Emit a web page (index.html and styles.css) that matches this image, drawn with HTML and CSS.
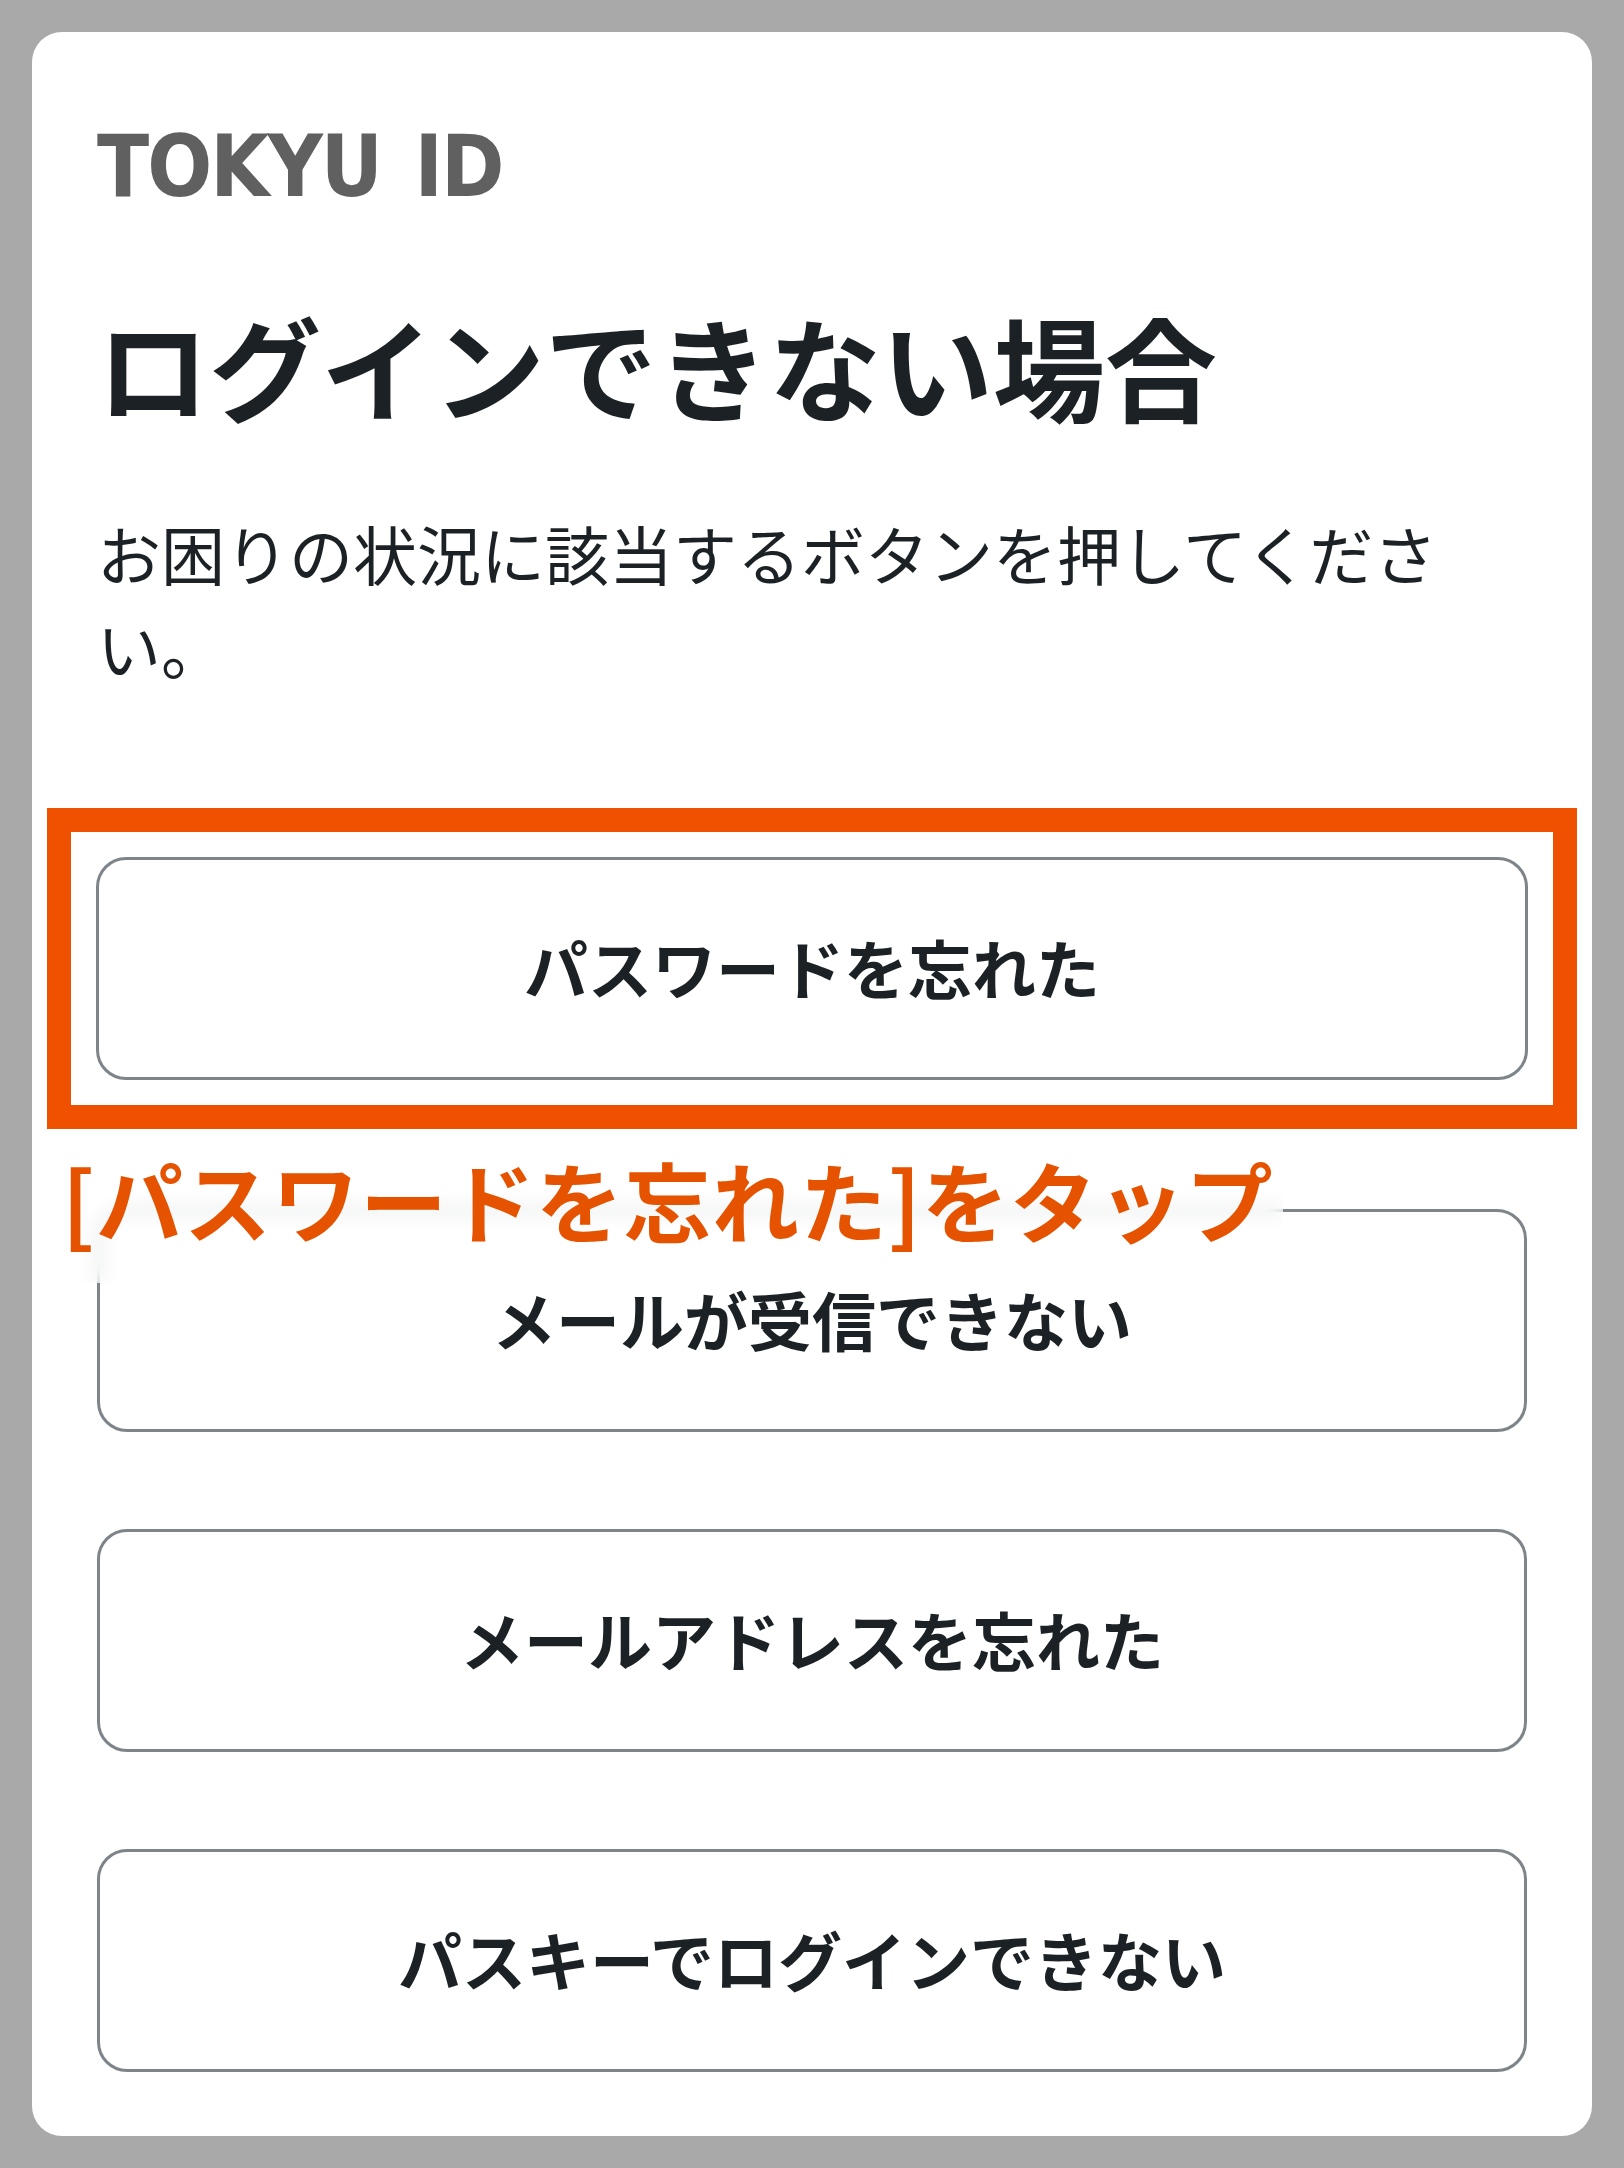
FILE: index.html
```html
<!DOCTYPE html>
<html lang="ja">
<head>
<meta charset="utf-8">
<title>ログインできない場合 | TOKYU ID</title>
<link rel="stylesheet" href="styles.css">
</head>
<body>
<main class="card">
  <div class="brand">TOKYU ID</div>
  <h1 class="title">ログインできない場合</h1>
  <p class="lead">お困りの状況に該当するボタンを押してください。</p>
  <div class="highlight">
    <button class="btn" type="button">パスワードを忘れた</button>
  </div>
  <div class="btn-wrap">
    <button class="btn" type="button">メールが受信できない</button>
    <div class="callout">[パスワードを忘れた]をタップ</div>
  </div>
  <button class="btn btn-gap" type="button">メールアドレスを忘れた</button>
  <button class="btn btn-gap" type="button">パスキーでログインできない</button>
</main>
</body>
</html>
```
FILE: styles.css
```css
html, body {
  margin: 0;
  padding: 0;
}
body {
  background: #a9a9a9;
  padding: 32px;
  font-family: "Noto Sans CJK JP", "Noto Sans", sans-serif;
  color: #1b2124;
}
.card {
  display: flex;
  flex-direction: column;
  background: #ffffff;
  border-radius: 30px;
  padding: 92px 65px 64px;
}
.brand {
  font-family: "DejaVu Sans Condensed", "DejaVu Sans", sans-serif;
  font-stretch: condensed;
  font-weight: 700;
  font-size: 85px;
  line-height: 86px;
  color: #606060;
  letter-spacing: -2px;
  word-spacing: 9px;
}
.title {
  margin: 83px 0 0;
  font-size: 112px;
  font-weight: 700;
  line-height: 1.3;
  color: #1b2124;
}
.lead {
  margin: 66px 0 0;
  font-size: 64px;
  font-weight: 400;
  line-height: 1.48;
  color: #1b2124;
}
.highlight {
  margin: 114px -50px 0;
  border: 24px solid #f05100;
  padding: 25px;
}
.btn {
  display: flex;
  align-items: center;
  justify-content: center;
  width: 100%;
  height: 223px;
  box-sizing: border-box;
  margin: 0;
  padding: 0 0 6px;
  background: #ffffff;
  border: 3px solid #7d858a;
  border-radius: 30px;
  font-family: "Noto Sans CJK JP", "Noto Sans", sans-serif;
  font-size: 64px;
  font-weight: 700;
  line-height: 1;
  color: #1b2124;
}
.btn-wrap {
  position: relative;
  margin-top: 80px;
}
.btn-gap {
  margin-top: 97px;
}
.callout {
  position: absolute;
  top: -69px;
  left: -57px;
  width: 1243px;
  height: 143px;
  box-sizing: border-box;
  padding: 16px 0 0 22px;
  background: rgba(255, 255, 255, 0.55);
  backdrop-filter: blur(9px);
  -webkit-backdrop-filter: blur(9px);
  font-size: 87px;
  font-weight: 700;
  line-height: 1;
  letter-spacing: 1px;
  color: #e65300;
  white-space: nowrap;
}
```
